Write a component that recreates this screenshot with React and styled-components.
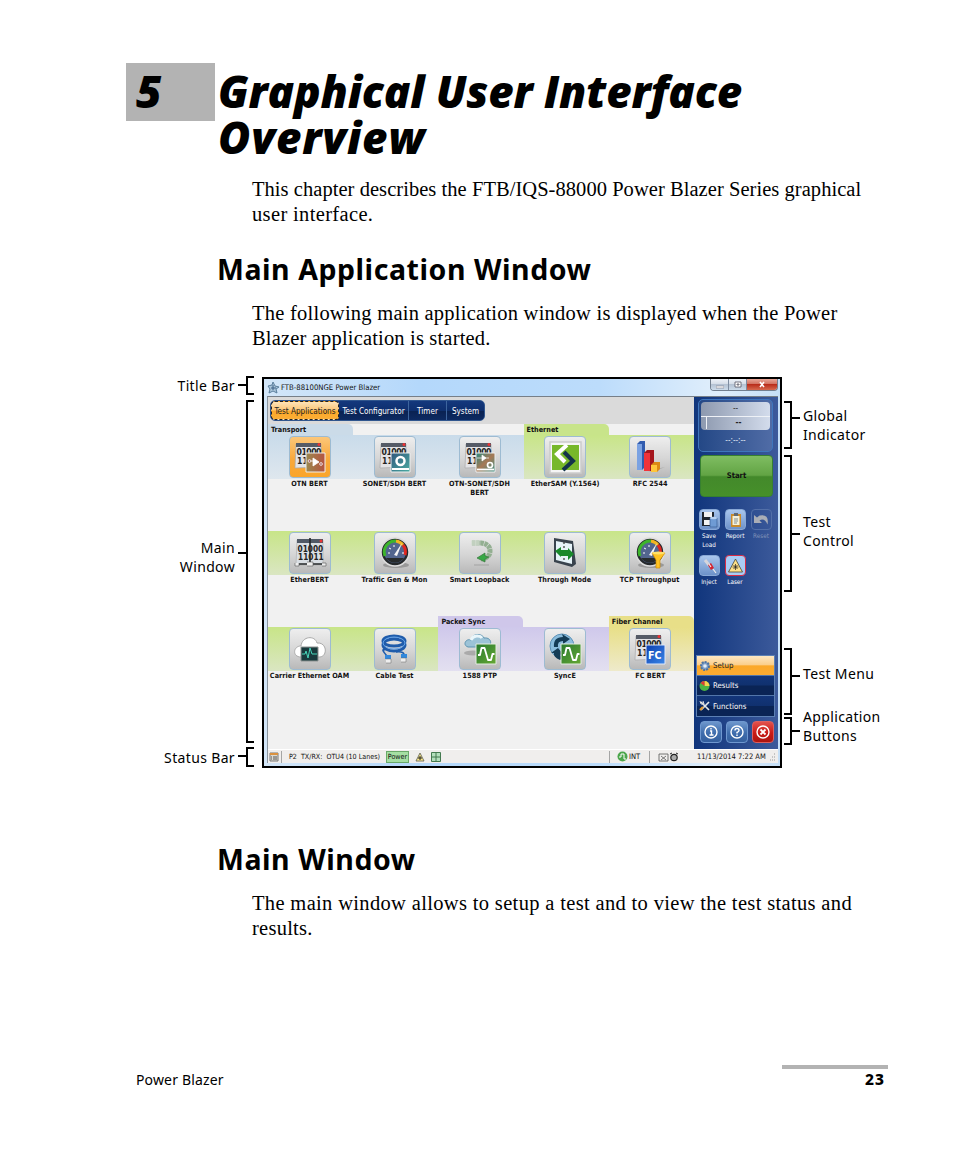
import styled, { createGlobalStyle } from 'styled-components'

const Global = createGlobalStyle`
    * { box-sizing: border-box; }
    body { margin: 0; background: #fff; color: #000; }
    svg { display: block; flex: none; }
`
const Page = styled.main`
    width: 954px;
    height: 1159px;
    padding-top: 63px;
    display: flex;
    flex-direction: column;
    overflow: hidden;
    font-family: 'Noto Sans', sans-serif;
`
const Chapter = styled.header`
    display: flex;
    gap: 3px;
    height: 114px;
    padding-left: 126px;
    font-family: 'Open Sans', 'Noto Sans', sans-serif;
    font-size: 44px;
    line-height: 46px;
    font-weight: 800;
    font-style: italic;
`
const ChapterNumber = styled.div`
    width: 89px;
    height: 58px;
    padding: 5px 0 0 10px;
    background: #b3b3b3;
`
const ChapterTitle = styled.h1`
    margin: 0;
    padding-top: 5px;
    font: inherit;
`
const Heading = styled.h2`
    margin: 0;
    height: ${p => p.$height}px;
    padding-left: 217px;
    font-size: 28.5px;
    line-height: 38px;
    font-weight: 700;
    letter-spacing: 0.55px;
`
const Paragraph = styled.p`
    margin: 0;
    height: ${p => p.$height}px;
    padding-left: 252px;
    font-family: 'Liberation Serif', serif;
    font-size: 20.5px;
    line-height: 25px;
`
const Line = styled.span`
    display: block;
    white-space: nowrap;
    letter-spacing: ${p => p.$spacing}px;
`
const Figure = styled.section`
    display: flex;
    height: 464px;
    padding-left: 130px;
`
const Callouts = styled.div`
    display: flex;
    flex-direction: column;
    width: ${p => p.$right ? 110 : 124}px;
    margin-right: ${p => p.$right ? 0 : 8}px;
    margin-left: ${p => p.$right ? 2 : 0}px;
    padding-top: ${p => p.$right ? 25 : 0}px;
`
const Callout = styled.div`
    display: flex;
    flex-direction: ${p => p.$right ? 'row-reverse' : 'row'};
    justify-content: flex-end;
    align-items: flex-start;
    height: ${p => p.$height}px;
    margin-bottom: ${p => p.$gap}px;
`
const CalloutText = styled.span`
    margin: ${p => p.$top}px ${p => p.$right ? 0 : 3}px 0 ${p => p.$right ? 3 : 0}px;
    text-align: ${p => p.$right ? 'left' : 'right'};
    white-space: pre;
    font-size: 14px;
    line-height: 19px;
    letter-spacing: 0.35px;
`
const Tick = styled.i`
    width: 8px;
    height: 2px;
    margin-top: ${p => p.$top}px;
    background: #000;
`
const RightBracket = styled.i`
    width: 8px;
    height: 100%;
    border: 2px solid #000;
    border-left: 0;
`
const LeftBracket = styled(RightBracket)`
    border-left: 2px solid #000;
    border-right: 0;
`
const Window = styled.div`
    width: 520px;
    height: 391px;
    margin-top: 1px;
    padding: 0 2px 3px 3px;
    border: 2px solid #000;
    background: linear-gradient(90deg, #d3e6f8, #b4d8fb 30%, #bcdcfb 65%, #e0eefb 88%, #c5dff7);
    font-family: 'DejaVu Sans Condensed', 'DejaVu Sans', sans-serif;
    font-stretch: condensed;
    font-size: 7px;
    color: #111;
`
const TitleBar = styled.div`
    display: flex;
    height: 17px;
    align-items: center;
    gap: 1px;
    white-space: nowrap;
`
const Caption = styled.span`
    flex: 1;
    font-size: 7.7px;
`
const Controls = styled.div`
    display: flex;
    height: 12px;
    margin: 0 0 5px;
    border: 1px solid #727f8f;
    border-top: 0;
    border-radius: 0 0 4px 4px;
    overflow: hidden;
`
const Control = styled.span`
    width: ${p => p.$close ? 30 : 18}px;
    display: flex;
    justify-content: center;
    align-items: center;
    border-right: ${p => p.$close ? 0 : 1}px solid #7d8ca0;
    background: ${p => p.$close
        ? 'linear-gradient(#e9a798, #d27261 45%, #ba2e1c 50%, #d6694e)'
        : 'linear-gradient(#edf2f8, #d5dde8 45%, #b5c2d3 50%, #ccdceb)'};
`
const Client = styled.div`
    width: 511px;
    height: 367px;
    border-top: 1px solid #777f88;
    border-left: 1px solid #8b959e;
    background: #f1f1f1;
`
const Workspace = styled.div`
    display: flex;
    height: 352px;
`
const Content = styled.div`
    width: 426px;
`
const Toolbar = styled.div`
    height: 27px;
    padding: 3px 2px;
    background: #dadada;
`
const Tabs = styled.div`
    display: flex;
    width: 215px;
    height: 21px;
    border: 1px solid #30568e;
    border-radius: 5px;
    overflow: hidden;
    background: linear-gradient(#14387d, #0e2f6e 50%, #0a2252 52%, #0d2a62);
`
const Tab = styled.div`
    width: ${p => p.$width}px;
    display: flex;
    align-items: center;
    justify-content: center;
    border-right: 1px solid #3d659e;
    color: #fff;
    font-size: 8.1px;
    white-space: nowrap;
    &:last-child { border-right: 0; }
    ${p => p.$active && `
        border: 1px dashed #222;
        border-radius: 4px;
        color: #222;
        background: linear-gradient(#fde3b8, #fbc677 48%, #fba829 52%, #fcae35);
    `}
`
const Row = styled.div`
    display: flex;
    height: 96px;
`
const tones = {
    blue: ['#cbdbe8', '#c9dbea, #dfe7ee'],
    green: ['#c8e48a', '#c8e588, #dae6c2'],
    purple: ['#cfc7ea', '#cfc8eb, #e3e0f0'],
    yellow: ['#e8df88', '#e8df87, #eeeacb'],
}
const Group = styled.div`
    width: ${p => p.$cols * 85.2}px;
`
const GroupTab = styled.div`
    width: 85px;
    height: 11px;
    padding-left: 3px;
    border-radius: 0 5px 0 0;
    background: ${p => p.$tone ? tones[p.$tone][0] : 'transparent'};
    line-height: 11px;
    font-size: 7.2px;
    font-weight: 700;
    white-space: nowrap;
`
const Band = styled.div`
    display: flex;
    height: 44px;
    background: linear-gradient(${p => tones[p.$tone][1]});
`
const Launcher = styled.div`
    width: 85px;
    flex: none;
    display: flex;
    flex-direction: column;
    align-items: center;
    padding: 1px 2px 0 0;
`
const Tile = styled.div`
    width: 42px;
    height: 42px;
    flex: none;
    border: 1px solid #9dbbd2;
    border-radius: 4px;
    background: ${p => p.$active
        ? 'linear-gradient(#fcc77a, #f9a83b 55%, #faa52a)'
        : 'linear-gradient(#eeeeee, #d5d5d5 55%, #b9b9b9)'};
`
const TileLabel = styled.div`
    width: 83px;
    margin-top: 2px;
    text-align: center;
    white-space: pre;
    font-size: 7.2px;
    line-height: 8.5px;
    font-weight: 700;
    letter-spacing: 0.05px;
`
const Sidebar = styled.div`
    width: 84px;
    padding: 2px 2px 0;
    display: flex;
    flex-direction: column;
    background: linear-gradient(90deg, #10357c, #3c5a9b);
`
const Indicator = styled.div`
    width: 75px;
    height: 53px;
    margin-left: 2px;
    padding: 2px;
    border: 1px solid #3f76bd;
    border-radius: 5px;
    background: linear-gradient(90deg, #244886, #506ca6);
    color: #e8eef8;
    text-align: center;
    font-size: 8px;
`
const Readout = styled.div`
    height: 28px;
    margin-bottom: 6px;
    border-radius: 4px;
    overflow: hidden;
    background: linear-gradient(90deg, #8d99af, #d3dcec);
    color: #222;
`
const ReadoutRow = styled.div`
    height: 14px;
    line-height: 12px;
    padding-top: ${p => p.$inset ? 0 : 1}px;
    border-top: ${p => p.$inset ? 1 : 0}px solid #eef1f6;
    font-weight: ${p => p.$inset ? 700 : 400};
`
const ReadoutValue = styled.div`
    margin-left: 5px;
    border-left: 1px solid #eef1f6;
`
const StartButton = styled.div`
    width: 73px;
    height: 42px;
    margin: 3px 0 12px 4px;
    border: 1px solid #378030;
    border-radius: 4px;
    background: linear-gradient(#7fbd62, #62a444 48%, #43892b 52%, #46902a);
    text-align: center;
    line-height: 40px;
    font-size: 7.7px;
    font-weight: 700;
`
const Tools = styled.div`
    display: flex;
    gap: 4px;
    height: ${p => p.$height}px;
    padding-left: 2px;
`
const Tool = styled.div`
    width: 22px;
    display: flex;
    flex-direction: column;
    align-items: center;
    color: ${p => p.$off ? '#8193b8' : '#fff'};
    font-size: 6.3px;
    line-height: 8.5px;
    text-align: center;
    white-space: pre;
`
const ToolButton = styled.div`
    width: 21px;
    height: 21px;
    margin-bottom: 2px;
    border: 1px solid ${p => p.$red ? '#d72b46' : p.$off ? '#526fa8' : '#88a8d6'};
    border-radius: 4px;
    background: ${p => p.$off ? 'transparent' : p.$red ? '#a9ccf5' : 'linear-gradient(#a9c6ed, #6d92c9)'};
`
const Menu = styled.div`
    width: 79px;
    margin-top: auto;
    border: 1px solid #5c80b4;
`
const MenuItem = styled.div`
    display: flex;
    align-items: center;
    height: 20px;
    padding-left: 2px;
    gap: 2px;
    font-size: 7.8px;
    color: ${p => p.$active ? '#222' : '#fff'};
    border-bottom: 1px solid #5276aa;
    background: ${p => p.$active
        ? 'linear-gradient(#fde7c3, #fbcf8b 46%, #fba829 52%, #fbab32)'
        : 'linear-gradient(#13367a, #10316f 48%, #0a2455 52%)'};
    &:last-child { border-bottom: 0; }
`
const AppButtons = styled.div`
    display: flex;
    gap: 4px;
    height: 32px;
    padding: 4px 0 0 4px;
`
const AppButton = styled.div`
    width: 22px;
    height: 22px;
    border: 1px solid ${p => p.$close ? '#dc5f5f' : '#6f98d0'};
    border-radius: 4px;
    background: ${p => p.$close
        ? 'linear-gradient(#e2514c, #c91a16 55%, #ab1510)'
        : 'linear-gradient(#6d96cc, #3f6dad 55%, #345f9e)'};
`
const StatusBar = styled.div`
    display: flex;
    align-items: center;
    height: 14px;
    background: #f0eeed;
    border-top: 1px solid #fff;
    font-size: 7.1px;
    white-space: pre;
`
const Cell = styled.div`
    display: flex;
    align-items: center;
    flex: none;
    gap: ${p => p.$gap || 0}px;
    width: ${p => p.$width}px;
    height: 12px;
    padding-left: ${p => p.$pad || 0}px;
    border-right: ${p => p.$last ? 0 : 1}px solid #a5a5a5;
`
const Power = styled.span`
    width: 23px;
    height: 12px;
    border: 1px solid #69a969;
    background: #a5dfa3;
    line-height: 10px;
    text-align: center;
`
const Stamp = styled.span`
    font-size: 7.5px;
`
const Footer = styled.footer`
    display: flex;
    justify-content: space-between;
    margin-top: auto;
    height: 94px;
    padding: 0 66px 0 136px;
    font-size: 14px;
`
const FooterTitle = styled.span`
    padding-top: 5px;
    letter-spacing: 0.15px;
`
const PageNumber = styled.span`
    width: 106px;
    height: 26px;
    padding: 1px 3px 0 0;
    border-top: 4px solid #b3b3b3;
    text-align: right;
    font-size: 15.5px;
    font-weight: 800;
    line-height: 19px;
    letter-spacing: 1px;
`

const Calendar = () => (
    <g>
        <path d="M6 7h25v23l-26 1z" fill="#e3e3e5" stroke="#a7a7aa" strokeWidth=".7" />
        <path d="M6 6h25v4H6z" fill="#555b66" />
        <circle cx="29" cy="7.500" r="1.500" fill="#e33" />
        <text x="6.500" y="18" fontSize="8.600" fontWeight="700" fill="#222" textLength="25">01000</text>
        <text x="7" y="27" fontSize="8.600" fontWeight="700" fill="#222">11</text>
    </g>
)

const Dial = () => (
    <g>
        <ellipse cx="21" cy="32" rx="13" ry="3" fill="#999" />
        <circle cx="20" cy="19" r="14" fill="#24282b" stroke="#ddd" strokeWidth="1.500" />
        <circle cx="20" cy="19" r="11" fill="#52658e" />
        <path d="M10 23a11 11 0 0 1 11-15" fill="none" stroke="#3db52b" strokeWidth="3" />
        <path d="M21 8a11 11 0 0 1 7 4" fill="none" stroke="#f2b520" strokeWidth="3" />
        <path d="M28 12a11 11 0 0 1 2 10" fill="none" stroke="#e02720" strokeWidth="3" />
        <path d="M11 25h18a11 11 0 0 1-18 0" fill="#272b2c" />
        <path d="M19 22l8-12-5 13z" fill="#f5f5f5" />
        <path d="M13 20h2m-1-5 2 1m3-4v2m8 6h2" stroke="#fff" />
    </g>
)

const Wave = () => (
    <g>
        <path d="M16 15h20v20H16z" fill="url(#wave)" stroke="#e3ecdf" />
        <path d="M18 26h2l1.500-7h3l3.500 12h3l1.500-6h2" fill="none" stroke="#fff" strokeWidth="1.800" strokeLinejoin="round" />
    </g>
)

const drawings = {
    otn: <g><Calendar /><path d="M16 16h19v19H16z" fill="url(#brown)" stroke="#eee" /><path d="M18 24h6M23 21v8l6-4z" fill="#fff" stroke="#fff" strokeWidth=".8" /><circle cx="19.500" cy="24" r="1.400" fill="#a66" stroke="#fff" strokeWidth=".7" /><circle cx="31" cy="27" r="1.400" fill="#a66" stroke="#fff" strokeWidth=".7" /></g>,
    sonet: <g><Calendar /><path d="M16 16h19v19H16z" fill="url(#teal)" stroke="#eee" /><circle cx="25.500" cy="24" r="4" fill="none" stroke="#fff" strokeWidth="2.500" /><path d="M17 32h17" stroke="#fff" strokeWidth="2" /></g>,
    both: <g><Calendar /><path d="M16 16h19v19H16z" fill="url(#mix)" stroke="#eee" /><path d="M17 21h12M22 18v6l4-3z" fill="#fff" stroke="#fff" strokeWidth=".7" /><circle cx="30" cy="28" r="2.500" fill="none" stroke="#fff" strokeWidth="1.700" /><path d="M17 32.500h17" stroke="#fff" strokeWidth="1.800" /></g>,
    sam: <g><path d="M5 5h31v31H5z" fill="#f5f5f5" stroke="#ccc" strokeWidth="1.500" /><path d="M7 8h27v25H7z" fill="#77b82a" /><path d="M22 8L12 17l8 8" fill="none" stroke="#fff" strokeWidth="4" /><path d="M19 15l9 9-10 9" fill="none" stroke="#13334a" strokeWidth="4" /></g>,
    rfc: <g><path d="M18 34l17-4-12 5z" fill="#aaa" /><path d="M7 7l3-3h5v26l-3 3H7z" fill="#315caf" /><path d="M7 7h5v26H7z" fill="#7ba2e2" /><path d="M14 16l3-3h7v18l-3 3h-7z" fill="#a5151d" /><path d="M14 16h6v18h-6z" fill="#f0333a" /><path d="M21 28l3-3h6v7l-3 3h-6z" fill="#dc8914" /><path d="M21 28h6v7h-6z" fill="#ffc63a" /></g>,
    ether: <g><path d="M7 7h26v25H6z" fill="#d9dee3" stroke="#aaa" strokeWidth=".6" /><path d="M7 6h26v4H7z" fill="#505966" /><circle cx="31" cy="8" r="1.500" fill="#e33" /><text x="7.500" y="19" fontSize="8.200" fontWeight="700" fill="#222">01000</text><text x="8" y="27" fontSize="8.200" fontWeight="700" fill="#222">11011</text><path d="M20 5v26M6 31h28" stroke="#252729" strokeWidth="1.600" /><path d="M5 30v3h4v-3m8-1h6v4h-6m15-3h4v3h-4" fill="#eee" stroke="#555" strokeWidth=".6" /></g>,
    dial: <Dial />,
    loop: <g><path d="M12 10h9q9 1 9 8t-9 8" fill="none" stroke="#93af91" strokeWidth="5" strokeDasharray="3.500 .6" /><path d="M11 10h8" stroke="#d5dfd3" strokeWidth="5" opacity=".7" /><path d="M17 25l8-5v3l4 1-4 2v3z" fill="#38a846" stroke="#38773c" strokeWidth=".7" /><path d="M14 32h15" stroke="#999" strokeWidth="1.500" opacity=".5" /></g>,
    through: <g><path d="M9 5L28 8L31 31L27 34L9 29Z" fill="#39434d" /><path d="M11 8L27 11V31L11 27Z" fill="#e6f3f8" /><path d="M19 9V29" stroke="#333" strokeWidth="1.200" strokeDasharray="2 2" /><path d="M10 18L16 14V17H23V15L29 21L23 27V23H16V24Z" fill="#19892b" /></g>,
    tcp: <g><Dial /><path d="M22 20h13l-5 7v8h-4v-8z" fill="#ffc323" stroke="#cf8b00" strokeWidth=".7" /><ellipse cx="28.500" cy="20" rx="6.500" ry="1.500" fill="#ffe16b" /></g>,
    oam: <g><path d="M11 28c-9 0-8-11 0-11 1-10 14-11 16-3 10-1 11 13 3 14z" fill="#fff" stroke="#aaa" /><path d="M11 18h17v14H11z" fill="#193a3d" stroke="#8d9291" /><path d="M12 25h3l1-3 2 7 2-10 2 6h5" fill="none" stroke="#47d6ba" /></g>,
    cable: <g><g fill="none" stroke="#1f5cab"><ellipse cx="19" cy="12" rx="11" ry="5" strokeWidth="3" /><ellipse cx="19" cy="16" rx="11" ry="6" strokeWidth="3" /><ellipse cx="19" cy="14" rx="11" ry="6" stroke="#64a4ea" /><path d="M10 21q-5-2 2 6m9-4q9-1 8 4" strokeWidth="1.500" /></g><path d="M10 26h6v4h-6m16-5h6v4h-6" fill="#3288dc" /><path d="M11 30h5v4h-5m15-5h5v4h-5" fill="#eee" stroke="#666" strokeWidth=".5" /></g>,
    ptp: <g><ellipse cx="13" cy="24" rx="9" ry="2.500" fill="#aaa" /><path d="M8 18c-6-2-2-9 3-7 1-7 11-7 13-2 8-1 9 8 2 9z" fill="#9cc3d7" stroke="#5d94b1" /><path d="M11 11c2-5 9-5 11-2" fill="none" stroke="#eaf6fb" strokeWidth="3" /><Wave /></g>,
    sync: <g><circle cx="17" cy="17" r="12" fill="#8bbddd" stroke="#5c91b7" /><path d="M9 18q-1-10 9-10l-1-3 8 5-7 5v-3q-6 0-5 6zm4 1l5 6-3 1 3 2-3 3q-7-3-6-7H6z" fill="#143c56" /><Wave /></g>,
    fc: <g><Calendar /><path d="M16 16h19v19H16z" fill="url(#fc)" stroke="#e0e8f8" /><text x="18" y="29.500" fontSize="10.500" fontWeight="700" fill="#fff">FC</text></g>,
}

const rows = [
    [
        { tone: 'blue', tab: 'Transport', apps: [['OTN BERT', 'otn'], ['SONET/SDH BERT', 'sonet'], ['OTN-SONET/SDH\nBERT', 'both']] },
        { tone: 'green', tab: 'Ethernet', apps: [['EtherSAM (Y.1564)', 'sam'], ['RFC 2544', 'rfc']] },
    ],
    [
        { tone: 'green', apps: [['EtherBERT', 'ether'], ['Traffic Gen & Mon', 'dial'], ['Smart Loopback', 'loop'], ['Through Mode', 'through'], ['TCP Throughput', 'tcp']] },
    ],
    [
        { tone: 'green', apps: [['Carrier Ethernet OAM', 'oam'], ['Cable Test', 'cable']] },
        { tone: 'purple', tab: 'Packet Sync', apps: [['1588 PTP', 'ptp'], ['SyncE', 'sync']] },
        { tone: 'yellow', tab: 'Fiber Channel', apps: [['FC BERT', 'fc']] },
    ],
]

const HiddenSvg = styled.svg`
    position: absolute;
`

const Gradients = () => (
    <HiddenSvg width="0" height="0">
        <defs>
            <linearGradient id="brown"><stop stopColor="#9b894f" /><stop offset="1" stopColor="#b65340" /></linearGradient>
            <linearGradient id="teal" x2="1" y2="1"><stop stopColor="#31577d" /><stop offset="1" stopColor="#4aada3" /></linearGradient>
            <linearGradient id="mix" x2="1" y2="1"><stop stopColor="#2a897f" /><stop offset=".5" stopColor="#a77955" /><stop offset="1" stopColor="#3a9188" /></linearGradient>
            <linearGradient id="wave" x2="1" y2="1"><stop stopColor="#287a30" /><stop offset="1" stopColor="#66a833" /></linearGradient>
            <linearGradient id="fc" x2="1" y2="1"><stop stopColor="#0c3faf" /><stop offset="1" stopColor="#3b87e8" /></linearGradient>
        </defs>
    </HiddenSvg>
)

const toolIcons = {
    save: <g><path d="M2 2h12v14H2z" fill="#20262e" /><path d="M4 2h8v5H4m0 3h8v5H4" fill="#f2f2f2" /><path d="M10 8h7v9h-7z" fill="#6f9bd4" stroke="#365b94" strokeWidth=".7" /><ellipse cx="13.500" cy="8" rx="3.500" ry="1.200" fill="#b8d2f1" /></g>,
    report: <g><path d="M5 4h10v13H5z" fill="#c98b2d" /><path d="M6.500 6h7v9h-7z" fill="#f4f1db" /><path d="M8 3h4v3H8z" fill="#626a72" /><path d="M8 9h4M8 11h4M8 13h3" stroke="#567" strokeWidth=".7" /></g>,
    reset: <path d="M2 5v8h8L7.500 10.500q5-3 8 4 2-11-8-9l-2.500 2z" fill="#a9adb6" />,
    inject: <g><path d="M5 4l4 5" stroke="#d5d5dc" strokeWidth="3" /><path d="M8 9l3-2 3 5-3 2z" fill="#d5232f" /><path d="M9 8l2 3m2 2l3 4" stroke="#eee" strokeWidth="1.200" /></g>,
    laser: <g><path d="M9.500 3l7 13h-14z" fill="#ffe28a" stroke="#443" strokeWidth=".8" strokeLinejoin="round" /><path d="M9.500 8v6m-3-3h6m-5-2 4 4m0-4-4 4" stroke="#222" strokeWidth=".7" /></g>,
}

const tools = [
    [['save', 'Save\nLoad'], ['report', 'Report'], ['reset', 'Reset']],
    [['inject', 'Inject'], ['laser', 'Laser']],
]

const leftCallouts = [
    { text: 'Title Bar', height: 19, gap: 5, top: 0, tick: 8 },
    { text: 'Main\nWindow', height: 343, gap: 4, top: 138, tick: 152 },
    { text: 'Status Bar', height: 20, gap: 0, top: 1, tick: 8 },
]
const rightCallouts = [
    { text: 'Global\nIndicator', height: 48, gap: 6, top: 5, tick: 16 },
    { text: 'Test\nControl', height: 137, gap: 56, top: 57, tick: 78 },
    { text: 'Test Menu', height: 67, gap: 2, top: 16, tick: 27 },
    { text: 'Application\nButtons', height: 28, gap: 0, top: -10, tick: 13 },
]

const Notes = ({ items, right }) => (
    <Callouts $right={right}>
        {items.map((item) =>
            <Callout key={item.text} $right={right} $height={item.height} $gap={item.gap}>
                <CalloutText $right={right} $top={item.top}>{item.text}</CalloutText>
                <Tick $top={item.tick} />
                {right ? <RightBracket /> : <LeftBracket />}
            </Callout>)}
    </Callouts>
)

const App = () => {
    return (
        <Page>
            <Global />
            <Gradients />
            <Chapter>
                <ChapterNumber>5</ChapterNumber>
                <ChapterTitle>
                    <Line $spacing={-0.2}>Graphical User Interface</Line>
                    <Line $spacing={0.8}>Overview</Line>
                </ChapterTitle>
            </Chapter>
            <Paragraph $height={73}>
                <Line $spacing={0.05}>This chapter describes the FTB/IQS-88000 Power Blazer Series graphical</Line>
                <Line $spacing={0.35}>user interface.</Line>
            </Paragraph>
            <Heading $height={51}>Main Application Window</Heading>
            <Paragraph $height={75}>
                <Line $spacing={0.24}>The following main application window is displayed when the Power</Line>
                <Line $spacing={0.17}>Blazer application is started.</Line>
            </Paragraph>
            <Figure>
                <Notes items={leftCallouts} />
                <Window>
                    <TitleBar>
                        <svg width="13" height="13" viewBox="0 0 13 13"><path d="M6 1l2 4 4 1-3 2 1 4-4-2-4 2 1-4-2-3 4-1z" fill="#a9c3d8" stroke="#5b7f9d" /><path d="M6 4v5M4 7h5" stroke="#3d6186" /></svg>
                        <Caption>FTB-88100NGE Power Blazer</Caption>
                        <Controls>
                            <Control><svg width="8" height="8"><path d="M0 5h8v2H0z" fill="#fff" stroke="#667" strokeWidth=".5" /></svg></Control>
                            <Control><svg width="8" height="8"><path d="M1 1h6v5H1zM3 3h2v1H3z" fill="#fff" stroke="#556" strokeWidth=".8" /></svg></Control>
                            <Control $close><svg width="8" height="8"><path d="M2 1l4 5m0-5L2 6" stroke="#fff" strokeWidth="1.600" /></svg></Control>
                        </Controls>
                    </TitleBar>
                    <Client>
                        <Workspace>
                            <Content>
                                <Toolbar>
                                    <Tabs>
                                        <Tab $width={68} $active>Test Applications</Tab>
                                        <Tab $width={70}>Test Configurator</Tab>
                                        <Tab $width={38}>Timer</Tab>
                                        <Tab $width={37}>System</Tab>
                                    </Tabs>
                                </Toolbar>
                                {rows.map((groups, i) =>
                                    <Row key={i}>
                                        {groups.map((group, j) =>
                                            <Group key={j} $cols={group.apps.length}>
                                                <GroupTab $tone={group.tab && group.tone}>{group.tab}</GroupTab>
                                                <Band $tone={group.tone}>
                                                    {group.apps.map(([label, icon]) =>
                                                        <Launcher key={label}>
                                                            <Tile $active={icon === 'otn'}>
                                                                <svg width="40" height="40" viewBox="0 0 40 40">{drawings[icon]}</svg>
                                                            </Tile>
                                                            <TileLabel>{label}</TileLabel>
                                                        </Launcher>)}
                                                </Band>
                                            </Group>)}
                                    </Row>)}
                            </Content>
                            <Sidebar>
                                <Indicator>
                                    <Readout>
                                        <ReadoutRow>--</ReadoutRow>
                                        <ReadoutRow $inset><ReadoutValue>--</ReadoutValue></ReadoutRow>
                                    </Readout>
                                    --:--:--
                                </Indicator>
                                <StartButton>Start</StartButton>
                                {tools.map((group, i) =>
                                    <Tools key={i} $height={i ? 36 : 46}>
                                        {group.map(([icon, label]) =>
                                            <Tool key={icon} $off={icon === 'reset'}>
                                                <ToolButton $off={icon === 'reset'} $red={icon === 'laser'}>
                                                    <svg width="19" height="19" viewBox="0 0 19 19">{toolIcons[icon]}</svg>
                                                </ToolButton>
                                                {label}
                                            </Tool>)}
                                    </Tools>)}
                                <Menu>
                                    <MenuItem $active>
                                        <svg width="12" height="12"><circle cx="6" cy="6" r="4" fill="#7f9fc7" stroke="#4d73a3" strokeWidth="2" strokeDasharray="2 1" /><circle cx="6" cy="6" r="1.800" fill="#e5edf6" /></svg>
                                        Setup
                                    </MenuItem>
                                    <MenuItem>
                                        <svg width="12" height="12"><circle cx="5.500" cy="6" r="5" fill="#4bb445" /><path d="M5.500 6V1a5 5 0 0 1 5 5z" fill="#f5d34d" /><path d="M5.500 6V1a5 5 0 0 0-4 2z" fill="#df3a35" /></svg>
                                        Results
                                    </MenuItem>
                                    <MenuItem>
                                        <svg width="12" height="12"><path d="M2 10l8-8m-8 0 8 8" stroke="#e5e8ea" strokeWidth="1.700" /><path d="M1 10l3-3" stroke="#df9c38" strokeWidth="2.300" /><path d="M1 1l1 3h3L4 1" fill="none" stroke="#ddd" /></svg>
                                        Functions
                                    </MenuItem>
                                </Menu>
                                <AppButtons>
                                    <AppButton><svg width="20" height="20"><circle cx="10" cy="10" r="6" fill="none" stroke="#fff" strokeWidth="1.400" /><path d="M9 9h1.500v4M8.500 13h4M10 6v1.500" fill="none" stroke="#fff" strokeWidth="1.400" /></svg></AppButton>
                                    <AppButton><svg width="20" height="20"><circle cx="10" cy="10" r="6" fill="none" stroke="#fff" strokeWidth="1.400" /><path d="M8 8.500q0-2 2-2t2 2q0 1-2 2v1m0 1v1.500" fill="none" stroke="#fff" strokeWidth="1.400" /></svg></AppButton>
                                    <AppButton $close><svg width="20" height="20"><circle cx="10" cy="10" r="6" fill="none" stroke="#fff" strokeWidth="1.400" /><path d="M7.500 7.500l5 5m0-5-5 5" stroke="#fff" strokeWidth="1.900" /></svg></AppButton>
                                </AppButtons>
                            </Sidebar>
                        </Workspace>
                        <StatusBar>
                            <Cell $width={14} $pad={1}><svg width="10" height="10"><path d="M1 1h8v8H1z" fill="#dbd9d2" stroke="#777" /><path d="M1 1h8v2H1z" fill="#da913f" /><path d="M4 5h4M4 7h4M2 5h1M2 7h1" stroke="#555" /></svg></Cell>
                            <Cell $width={328} $pad={7} $gap={6}>
                                P2  TX/RX:  OTU4 (10 Lanes)
                                <Power>Power</Power>
                                <svg width="10" height="10"><path d="M5 1l4 8H1z" fill="#ffeb8a" stroke="#776" /><path d="M5 4v4M3 6h4" stroke="#222" /></svg>
                                <svg width="10" height="10"><path d="M.5.5h9v9h-9zM5 1v8M1 5h8" fill="#b3dfbc" stroke="#43794f" /></svg>
                            </Cell>
                            <Cell $width={40} $pad={7} $gap={1}>
                                <svg width="11" height="11"><circle cx="5.500" cy="5.500" r="5" fill="#4ca64b" /><path d="M2 6h2V3h3v5h2" fill="none" stroke="#fff" /></svg>
                                <Stamp>INT</Stamp>
                            </Cell>
                            <Cell $width={47} $pad={8} $last>
                                <svg width="22" height="10"><path d="M1 2h9v7H1zM3 4l5 4m0-4L3 8" fill="none" stroke="#555" strokeWidth=".8" /><circle cx="16" cy="5.500" r="3.200" fill="#aaa" stroke="#222" strokeWidth="1.200" /><path d="M12 2l2-1m4 0 2 1" stroke="#222" /></svg>
                            </Cell>
                            <Cell $width={80} $last $gap={3}>
                                <Stamp>11/13/2014 7:22 AM</Stamp>
                                <svg width="8" height="9"><path d="M5 2h1M3 5h1M5 5h1M1 8h1M3 8h1M5 8h1" stroke="#999" /></svg>
                            </Cell>
                        </StatusBar>
                    </Client>
                </Window>
                <Notes items={rightCallouts} right />
            </Figure>
            <Heading $height={51}>Main Window</Heading>
            <Paragraph $height={50}>
                <Line $spacing={0.34}>The main window allows to setup a test and to view the test status and</Line>
                <Line $spacing={0.25}>results.</Line>
            </Paragraph>
            <Footer>
                <FooterTitle>Power Blazer</FooterTitle>
                <PageNumber>23</PageNumber>
            </Footer>
        </Page>
    )
}

export default App
